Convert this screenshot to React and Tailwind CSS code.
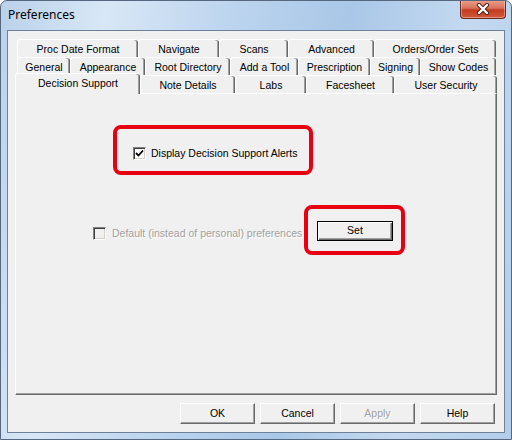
import React from "react";

const font = "font-['Liberation_Sans',Arial,sans-serif]";

function Tab({ label, w, selected }) {
  if (selected) {
    return (
      <div
        className={`relative z-10 -mt-[2px] h-[21px] ${w} shrink-0 rounded-t-[3px] border-l border-t border-white bg-[#f0f0f0] shadow-[inset_-1px_0_0_#696969,inset_-2px_0_0_#a0a0a0] flex items-start justify-center pt-[2px] leading-[14px]`}
      >
        {label}
      </div>
    );
  }
  return (
    <div
      className={`h-[18px] ${w} shrink-0 rounded-t-[3px] border-l border-t border-white bg-[#f0f0f0] shadow-[inset_-1px_0_0_#696969,inset_-2px_0_0_#a0a0a0] flex items-center justify-center leading-[14px]`}
    >
      {label}
    </div>
  );
}

function CheckBox({ checked, disabled }) {
  return (
    <div
      className={`h-[13px] w-[13px] shrink-0 border border-t-[#808080] border-l-[#808080] border-r-white border-b-white shadow-[inset_1px_1px_0_#404040,inset_-1px_-1px_0_#d4d0c8] flex items-center justify-center ${
        disabled ? "bg-[#f0f0f0]" : "bg-white"
      }`}
    >
      {checked && (
        <svg width="9" height="9" viewBox="0 0 9 9">
          <path d="M1 4 L3.5 6.5 L8 1.5" fill="none" stroke="#000" strokeWidth="1.8" />
        </svg>
      )}
    </div>
  );
}

function Button({ children, disabled }) {
  return (
    <div
      className={`h-[21px] w-[75px] shrink-0 flex items-center justify-center bg-[#f0f0f0] border border-t-white border-l-white border-r-[#696969] border-b-[#696969] shadow-[inset_-1px_-1px_0_#a0a0a0] ${
        disabled ? "text-[#a0a0a0] [text-shadow:1px_1px_0_#fff]" : "text-black"
      }`}
    >
      {children}
    </div>
  );
}

export default function App() {
  return (
    <div
      className={`${font} relative h-[440px] w-[512px] overflow-hidden rounded-t-[7px] border border-[#55687f] bg-[linear-gradient(100deg,#b9d1ea_0%,#d8e7f6_18%,#bcd4ee_40%,#a9c7e7_60%,#c4d9f0_80%,#b3cde9_100%)] px-[6px] pb-[6px] text-[10.5px] text-black`}
    >
      <div className="flex h-[29px] items-start">
        <div className="pl-[1px] pt-[6px] font-['Noto_Sans',sans-serif] text-[12px] leading-[16px] text-black">
          Preferences
        </div>
        <div className="-mt-[1px] ml-auto mr-[-1px] flex h-[19px] w-[46px] items-center justify-center rounded-b-[4px] border border-t-0 border-[#6f2b1e] bg-[linear-gradient(180deg,#eba08c_0%,#d8735a_45%,#c23b20_55%,#d25a3c_100%)] shadow-[inset_0_0_0_1px_rgba(255,255,255,0.35)]">
          <svg width="16" height="12" viewBox="0 0 16 12">
            <path d="M4 2 L12 10 M12 2 L4 10" stroke="#4a1d14" strokeWidth="4.2" strokeLinecap="round" />
            <path d="M4 2 L12 10 M12 2 L4 10" stroke="#fff" strokeWidth="2.4" strokeLinecap="round" />
          </svg>
        </div>
      </div>

      <div className="flex h-[403px] flex-col border border-[#6d819a] bg-[#f0f0f0] px-[7px] pt-[8px]">
        <div className="flex flex-col">
          <div className="ml-[2px] flex">
            <Tab label="Proc Date Format" w="w-[121px]" />
            <Tab label="Navigate" w="w-[81px]" />
            <Tab label="Scans" w="w-[69px]" />
            <Tab label="Advanced" w="w-[86px]" />
            <Tab label="Orders/Order Sets" w="w-[122px]" />
          </div>
          <div className="ml-[2px] flex">
            <Tab label="General" w="w-[53px]" />
            <Tab label="Appearance" w="w-[75px]" />
            <Tab label="Root Directory" w="w-[85px]" />
            <Tab label="Add a Tool" w="w-[68px]" />
            <Tab label="Prescription" w="w-[72px]" />
            <Tab label="Signing" w="w-[50px]" />
            <Tab label="Show Codes" w="w-[76px]" />
          </div>
          <div className="flex h-[18px] items-start">
            <Tab label="Decision Support" w="w-[125px]" selected />
            <Tab label="Note Details" w="w-[95px]" />
            <Tab label="Labs" w="w-[71px]" />
            <Tab label="Facesheet" w="w-[88px]" />
            <Tab label="User Security" w="w-[103px]" />
          </div>
        </div>

        <div className="flex h-[302px] w-[482px] flex-col border border-t-white border-l-white border-r-[#696969] border-b-[#696969] shadow-[inset_-1px_-1px_0_#a0a0a0]">
          <div className="ml-[97px] mt-[31px] flex h-[50px] w-[200px] items-start gap-[5px] rounded-[8px] border-[4px] border-[#e60012] pl-[16px] pt-[18px]">
            <CheckBox checked />
            <span className="leading-[13px]">Display Decision Support Alerts</span>
          </div>

          <div className="ml-[77px] mt-[30px] flex items-start">
            <div className="flex w-[211px] items-start gap-[6px] pt-[22px]">
              <CheckBox disabled />
              <span className="whitespace-nowrap leading-[13px] text-[#a0a0a0] [text-shadow:1px_1px_0_#fff]">
                Default (instead of personal) preferences
              </span>
            </div>
            <div className="flex h-[50px] w-[101px] items-start rounded-[8px] border-[4px] border-[#e60012] pl-[9px] pt-[12px]">
              <div className="flex h-[20px] w-[76px] items-center justify-center border border-black bg-[#f0f0f0] shadow-[inset_1px_1px_0_#fff,inset_-1px_-1px_0_#696969,inset_-2px_-2px_0_#a0a0a0]">
                Set
              </div>
            </div>
          </div>
        </div>

        <div className="mr-[2px] mt-[8px] flex justify-end gap-[5px]">
          <Button>OK</Button>
          <Button>Cancel</Button>
          <Button disabled>Apply</Button>
          <Button>Help</Button>
        </div>
      </div>
    </div>
  );
}
